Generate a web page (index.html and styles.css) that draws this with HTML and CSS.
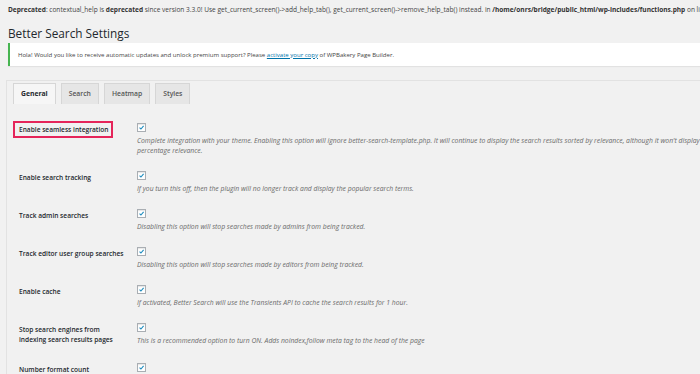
FILE: index.html
```html
<!DOCTYPE html>
<html lang="en">
<head>
<meta charset="utf-8">
<title>Better Search Settings</title>
<link rel="stylesheet" href="styles.css">
</head>
<body>
<div class="page">
  <p class="deprecated"><b>Deprecated</b>: contextual_help is <b>deprecated</b> since version 3.3.0! Use get_current_screen()-&gt;add_help_tab(), get_current_screen()-&gt;remove_help_tab() instead. in <b>/home/onrs/bridge/public_html/wp-includes/functions.php</b> on line <b>4011</b></p>
  <h1 class="title">Better Search Settings</h1>
  <div class="notice">
    <p>Hola! Would you like to receive automatic updates and unlock premium support? Please <a href="#">activate your copy</a> of WPBakery Page Builder.</p>
  </div>
  <div class="panel">
    <nav class="tabs">
      <a class="tab active" href="#">General</a>
      <a class="tab" href="#">Search</a>
      <a class="tab" href="#">Heatmap</a>
      <a class="tab" href="#">Styles</a>
    </nav>
    <div class="form">
      <div class="row">
        <div class="label"><span class="mark">Enable seamless integration</span></div>
        <div class="field">
          <span class="check"><svg viewBox="0 0 10 10"><path d="M2.2 5.2 L4.2 7.2 L8 2.8" /></svg></span>
          <p class="desc">Complete integration with your theme. Enabling this option will ignore better-search-template.php. It will continue to display the search results sorted by relevance, although it won't display<br>percentage relevance.</p>
        </div>
      </div>
      <div class="row">
        <div class="label">Enable search tracking</div>
        <div class="field">
          <span class="check"><svg viewBox="0 0 10 10"><path d="M2.2 5.2 L4.2 7.2 L8 2.8" /></svg></span>
          <p class="desc">If you turn this off, then the plugin will no longer track and display the popular search terms.</p>
        </div>
      </div>
      <div class="row">
        <div class="label">Track admin searches</div>
        <div class="field">
          <span class="check"><svg viewBox="0 0 10 10"><path d="M2.2 5.2 L4.2 7.2 L8 2.8" /></svg></span>
          <p class="desc">Disabling this option will stop searches made by admins from being tracked.</p>
        </div>
      </div>
      <div class="row">
        <div class="label">Track editor user group searches</div>
        <div class="field">
          <span class="check"><svg viewBox="0 0 10 10"><path d="M2.2 5.2 L4.2 7.2 L8 2.8" /></svg></span>
          <p class="desc">Disabling this option will stop searches made by editors from being tracked.</p>
        </div>
      </div>
      <div class="row">
        <div class="label">Enable cache</div>
        <div class="field">
          <span class="check"><svg viewBox="0 0 10 10"><path d="M2.2 5.2 L4.2 7.2 L8 2.8" /></svg></span>
          <p class="desc">If activated, Better Search will use the Transients API to cache the search results for 1 hour.</p>
        </div>
      </div>
      <div class="row">
        <div class="label">Stop search engines from<br>indexing search results pages</div>
        <div class="field">
          <span class="check"><svg viewBox="0 0 10 10"><path d="M2.2 5.2 L4.2 7.2 L8 2.8" /></svg></span>
          <p class="desc">This is a recommended option to turn ON. Adds noindex,follow meta tag to the head of the page</p>
        </div>
      </div>
      <div class="row">
        <div class="label">Number format count</div>
        <div class="field">
          <span class="check"><svg viewBox="0 0 10 10"><path d="M2.2 5.2 L4.2 7.2 L8 2.8" /></svg></span>
          <p class="desc">Activating this option will convert the search count to a number format.</p>
        </div>
      </div>
    </div>
  </div>
</div>
</body>
</html>
```

FILE: styles.css
```css
html, body {
  margin: 0;
  padding: 0;
  background: #f1f1f1;
  overflow: hidden;
}
body {
  font-family: "Open Sans", "Noto Sans", sans-serif;
  color: #444;
}
.page {
  width: 780px;
  padding: 0 0 0 8px;
}
.deprecated {
  margin: 0;
  padding-top: 6px;
  font-size: 6.55px;
  line-height: 8px;
  white-space: nowrap;
  color: #444;
}
.deprecated b { font-weight: 700; color: #333; }
.title {
  margin: 0;
  padding-top: 12px;
  font-size: 11.8px;
  line-height: 14px;
  font-weight: 400;
  color: #23282d;
}
.notice {
  margin-top: 3px;
  background: #fff;
  border-left: 2px solid #46b450;
  box-shadow: 0 1px 1px rgba(0,0,0,0.06);
  height: 23px;
  display: flex;
  align-items: center;
  padding-left: 8px;
}
.notice p {
  margin: 0;
  font-size: 6.05px;
  line-height: 8px;
  color: #444;
}
.notice a { color: #0073aa; }
.panel {
  margin-top: 14px;
  margin-left: -2px;
  border-top: 1px solid #e2e2e2;
  border-left: 1px solid #e2e2e2;
  padding-top: 2px;
}
.tabs {
  display: flex;
  gap: 5px;
  padding-left: 6px;
}
.tab {
  display: block;
  height: 20px;
  line-height: 20px;
  padding: 0 7px;
  font-size: 6.8px;
  font-weight: 600;
  color: #555;
  text-decoration: none;
  background: #e6e6e6;
  border: 1px solid #d6d6d6;
  border-bottom: none;
}
.tab.active {
  background: #f6f6f6;
  color: #23282d;
  font-weight: 700;
}
.form {
  padding-top: 11px;
  padding-left: 12px;
}
.row {
  display: grid;
  grid-template-columns: 118px 1fr;
}
.label {
  padding: 10px 0 10px 0;
  font-size: 6.6px;
  line-height: 10px;
  font-weight: 600;
  color: #23282d;
}
.mark {
  position: relative;
}
.mark::after {
  content: "";
  position: absolute;
  left: -6px;
  right: -5px;
  top: -4px;
  bottom: -4px;
  border: 2px solid #e5255a;
}
.field {
  padding: 7.5px 0;
}
.check {
  display: block;
  width: 7px;
  height: 7px;
  border: 1px solid #a9aeb3;
  background: #fff;
  box-shadow: inset 0 1px 1px rgba(0,0,0,0.1);
}
.check svg {
  display: block;
  width: 7px;
  height: 7px;
}
.check path {
  fill: none;
  stroke: #1e8cbe;
  stroke-width: 1.6;
}
.desc {
  margin: 4px 0 0 0;
  font-size: 6.8px;
  line-height: 10px;
  font-style: italic;
  color: #6a6a6a;
  white-space: nowrap;
}
```
